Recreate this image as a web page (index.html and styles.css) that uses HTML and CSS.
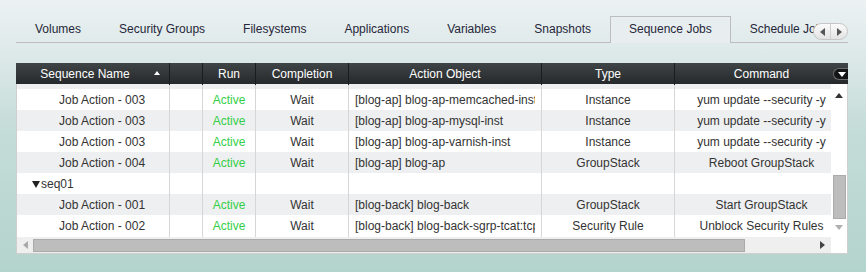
FILE: index.html
```html
<!DOCTYPE html>
<html>
<head>
    <meta charset="UTF-8">
    <meta name="viewport" content="width=device-width, initial-scale=1.0">
    <link rel="stylesheet" href="styles.css">
</head>
<body>
    <div class="page">
        <div class="tabbar">
            <div class="tabs">
                <div class="tab">Volumes</div>
                <div class="tab">Security Groups</div>
                <div class="tab">Filesystems</div>
                <div class="tab">Applications</div>
                <div class="tab">Variables</div>
                <div class="tab">Snapshots</div>
                <div class="tab active">Sequence Jobs</div>
                <div class="tab">Schedule Jobs</div>
            </div>
            <div class="tab-nav">
                <span class="nav-btn"><i class="tri tri-left"></i></span>
                <span class="nav-btn"><i class="tri tri-right"></i></span>
            </div>
        </div>

        <div class="grid">
            <div class="grid-head">
                <div class="hcell hname"><span class="htext">Sequence Name</span><i class="sort-up"></i></div>
                <div class="hcell"></div>
                <div class="hcell">Run</div>
                <div class="hcell">Completion</div>
                <div class="hcell">Action Object</div>
                <div class="hcell">Type</div>
                <div class="hcell">Command</div>
                <span class="menu-btn"><i class="menu-tri"></i></span>
            </div>

            <div class="grid-body">
                <div class="rows">
                    <div class="row row-cut">
                        <div class="cell"></div><div class="cell"></div><div class="cell"></div><div class="cell"></div><div class="cell"></div><div class="cell"></div><div class="cell"></div>
                    </div>
                    <div class="row">
                        <div class="cell name">Job Action - 003</div>
                        <div class="cell"></div>
                        <div class="cell run">Active</div>
                        <div class="cell">Wait</div>
                        <div class="cell obj">[blog-ap] blog-ap-memcached-inst</div>
                        <div class="cell">Instance</div>
                        <div class="cell">yum update --security -y</div>
                    </div>
                    <div class="row">
                        <div class="cell name">Job Action - 003</div>
                        <div class="cell"></div>
                        <div class="cell run">Active</div>
                        <div class="cell">Wait</div>
                        <div class="cell obj">[blog-ap] blog-ap-mysql-inst</div>
                        <div class="cell">Instance</div>
                        <div class="cell">yum update --security -y</div>
                    </div>
                    <div class="row">
                        <div class="cell name">Job Action - 003</div>
                        <div class="cell"></div>
                        <div class="cell run">Active</div>
                        <div class="cell">Wait</div>
                        <div class="cell obj">[blog-ap] blog-ap-varnish-inst</div>
                        <div class="cell">Instance</div>
                        <div class="cell">yum update --security -y</div>
                    </div>
                    <div class="row">
                        <div class="cell name">Job Action - 004</div>
                        <div class="cell"></div>
                        <div class="cell run">Active</div>
                        <div class="cell">Wait</div>
                        <div class="cell obj">[blog-ap] blog-ap</div>
                        <div class="cell">GroupStack</div>
                        <div class="cell">Reboot GroupStack</div>
                    </div>
                    <div class="row">
                        <div class="cell group"><i class="expand"></i>seq01</div>
                        <div class="cell"></div>
                        <div class="cell"></div>
                        <div class="cell"></div>
                        <div class="cell"></div>
                        <div class="cell"></div>
                        <div class="cell"></div>
                    </div>
                    <div class="row">
                        <div class="cell name">Job Action - 001</div>
                        <div class="cell"></div>
                        <div class="cell run">Active</div>
                        <div class="cell">Wait</div>
                        <div class="cell obj">[blog-back] blog-back</div>
                        <div class="cell">GroupStack</div>
                        <div class="cell">Start GroupStack</div>
                    </div>
                    <div class="row">
                        <div class="cell name">Job Action - 002</div>
                        <div class="cell"></div>
                        <div class="cell run">Active</div>
                        <div class="cell">Wait</div>
                        <div class="cell obj">[blog-back] blog-back-sgrp-tcat:tcp</div>
                        <div class="cell">Security Rule</div>
                        <div class="cell">Unblock Security Rules</div>
                    </div>
                </div>
                <div class="vscroll">
                    <i class="arr-up"></i>
                    <div class="vthumb"></div>
                    <i class="arr-down"></i>
                </div>
            </div>

            <div class="hbar">
                <div class="htrack">
                    <i class="arr-left"></i>
                    <div class="hthumb"></div>
                    <i class="arr-right"></i>
                </div>
                <div class="corner"></div>
            </div>
        </div>
    </div>
</body>
</html>
```

FILE: styles.css
```css
html, body {
    height: 100%;
}
body {
    margin: 0;
    font-family: "Liberation Sans", Arial, sans-serif;
    font-size: 12px;
    color: #333;
    background: linear-gradient(to bottom, #ecf1f2 0%, #d9e7e6 25%, #c6ddd9 45%, #b3d4cc 100%);
}
.page {
    padding: 0 18px 0 16px;
}

/* tabs */
.tabbar {
    position: relative;
    margin-top: 16px;
    height: 26px;
    border-bottom: 1px solid #bdbdbd;
}
.tabs {
    display: flex;
    height: 27px;
    overflow: hidden;
    white-space: nowrap;
}
.tab {
    flex: none;
    box-sizing: border-box;
    height: 26px;
    padding: 0 18px;
    border: 1px solid transparent;
    border-bottom: 0;
    line-height: 25px;
    color: #26263a;
}
.tab.active {
    height: 27px;
    border-color: #bdbdbd;
    background: #e8eeef;
}
.tab-nav {
    position: absolute;
    right: 0;
    top: 7px;
    display: flex;
    box-sizing: border-box;
    width: 35px;
    height: 17px;
    border: 1px solid #c6c6c6;
    border-radius: 9px;
    background: linear-gradient(#fbfbfb, #e3e3e3);
}
.nav-btn {
    flex: 1;
    display: flex;
    align-items: center;
    justify-content: center;
}
.nav-btn:first-child {
    border-right: 1px solid #d0d0d0;
}
.tri {
    width: 0;
    height: 0;
    border-top: 4px solid transparent;
    border-bottom: 4px solid transparent;
}
.tri-left {
    border-right: 5px solid #555;
}
.tri-right {
    border-left: 5px solid #555;
}

/* grid */
.grid {
    margin-top: 20px;
    border: 1px solid #cfcfcf;
    border-top: 0;
    background: #fff;
}
.grid-head {
    position: relative;
    display: grid;
    grid-template-columns: 154px 33px 53px 93px 193px 133px 173px;
    height: 21px;
    margin: 0 -1px;
    background: linear-gradient(#3f4447, #26292b);
    color: #fff;
}
.hcell {
    border-right: 1px solid #1a1c1e;
    line-height: 22px;
    text-align: center;
    white-space: nowrap;
}
.hcell:last-of-type {
    border-right: 0;
}
.hname {
    display: flex;
    align-items: center;
}
.htext {
    flex: 1;
    text-align: center;
}
.sort-up {
    width: 0;
    height: 0;
    margin: 0 9px 2px 0;
    border-left: 3px solid transparent;
    border-right: 3px solid transparent;
    border-bottom: 4px solid #fff;
}
.menu-btn {
    position: absolute;
    right: 0;
    top: 5px;
    display: flex;
    align-items: center;
    justify-content: center;
    box-sizing: border-box;
    width: 15px;
    height: 12px;
    border: 1px solid #6a6a6a;
    border-right: 0;
    border-radius: 6px 0 0 6px;
    background: #141516;
}
.menu-tri {
    width: 0;
    height: 0;
    margin-left: 2px;
    border-left: 4px solid transparent;
    border-right: 4px solid transparent;
    border-top: 5px solid #fff;
}

.grid-body {
    display: flex;
    height: 153px;
}
.rows {
    flex: 1;
    overflow: hidden;
}
.row {
    display: grid;
    grid-template-columns: 153px 33px 53px 93px 193px 133px 174px;
    height: 21px;
    line-height: 22px;
}
.row:nth-child(odd) {
    background: #eeeff0;
}
.row-cut {
    height: 5px;
}
.cell {
    padding: 0 6px;
    border-right: 1px solid #d6d6d6;
    text-align: center;
    white-space: nowrap;
    overflow: clip;
    overflow-clip-margin: content-box;
    color: #333;
}
.cell.name {
    padding-left: 42px;
    text-align: left;
}
.cell.group {
    display: flex;
    align-items: center;
    padding-left: 15px;
    text-align: left;
}
.expand {
    width: 0;
    height: 0;
    margin: 1px 1px 0 0;
    border-left: 4px solid transparent;
    border-right: 4px solid transparent;
    border-top: 7px solid #222;
}
.cell.obj {
    text-align: left;
}
.cell.run {
    color: #33cf48;
}

.vscroll {
    display: flex;
    flex-direction: column;
    align-items: center;
    width: 16px;
    background: #fff;
}
.arr-up {
    width: 0;
    height: 0;
    margin-top: 9px;
    border-left: 4px solid transparent;
    border-right: 4px solid transparent;
    border-bottom: 5px solid #333;
}
.vthumb {
    box-sizing: border-box;
    width: 13px;
    height: 44px;
    margin-top: 77px;
    border: 1px solid #ababab;
    background: #bdbdbd;
}
.arr-down {
    width: 0;
    height: 0;
    margin-top: 6px;
    border-left: 4px solid transparent;
    border-right: 4px solid transparent;
    border-top: 5px solid #b0b0b0;
}

.hbar {
    display: flex;
    height: 16px;
}
.htrack {
    flex: 1;
    display: flex;
    align-items: center;
    padding: 0 6px;
    background: #efefef;
}
.arr-left {
    width: 0;
    height: 0;
    border-top: 4px solid transparent;
    border-bottom: 4px solid transparent;
    border-right: 5px solid #aaa;
}
.hthumb {
    box-sizing: border-box;
    width: 712px;
    height: 13px;
    margin-left: 5px;
    border: 1px solid #ababab;
    background: #bdbdbd;
}
.arr-right {
    width: 0;
    height: 0;
    margin-left: auto;
    border-top: 4px solid transparent;
    border-bottom: 4px solid transparent;
    border-left: 5px solid #444;
}
.corner {
    width: 16px;
    background: #fff;
}
```
